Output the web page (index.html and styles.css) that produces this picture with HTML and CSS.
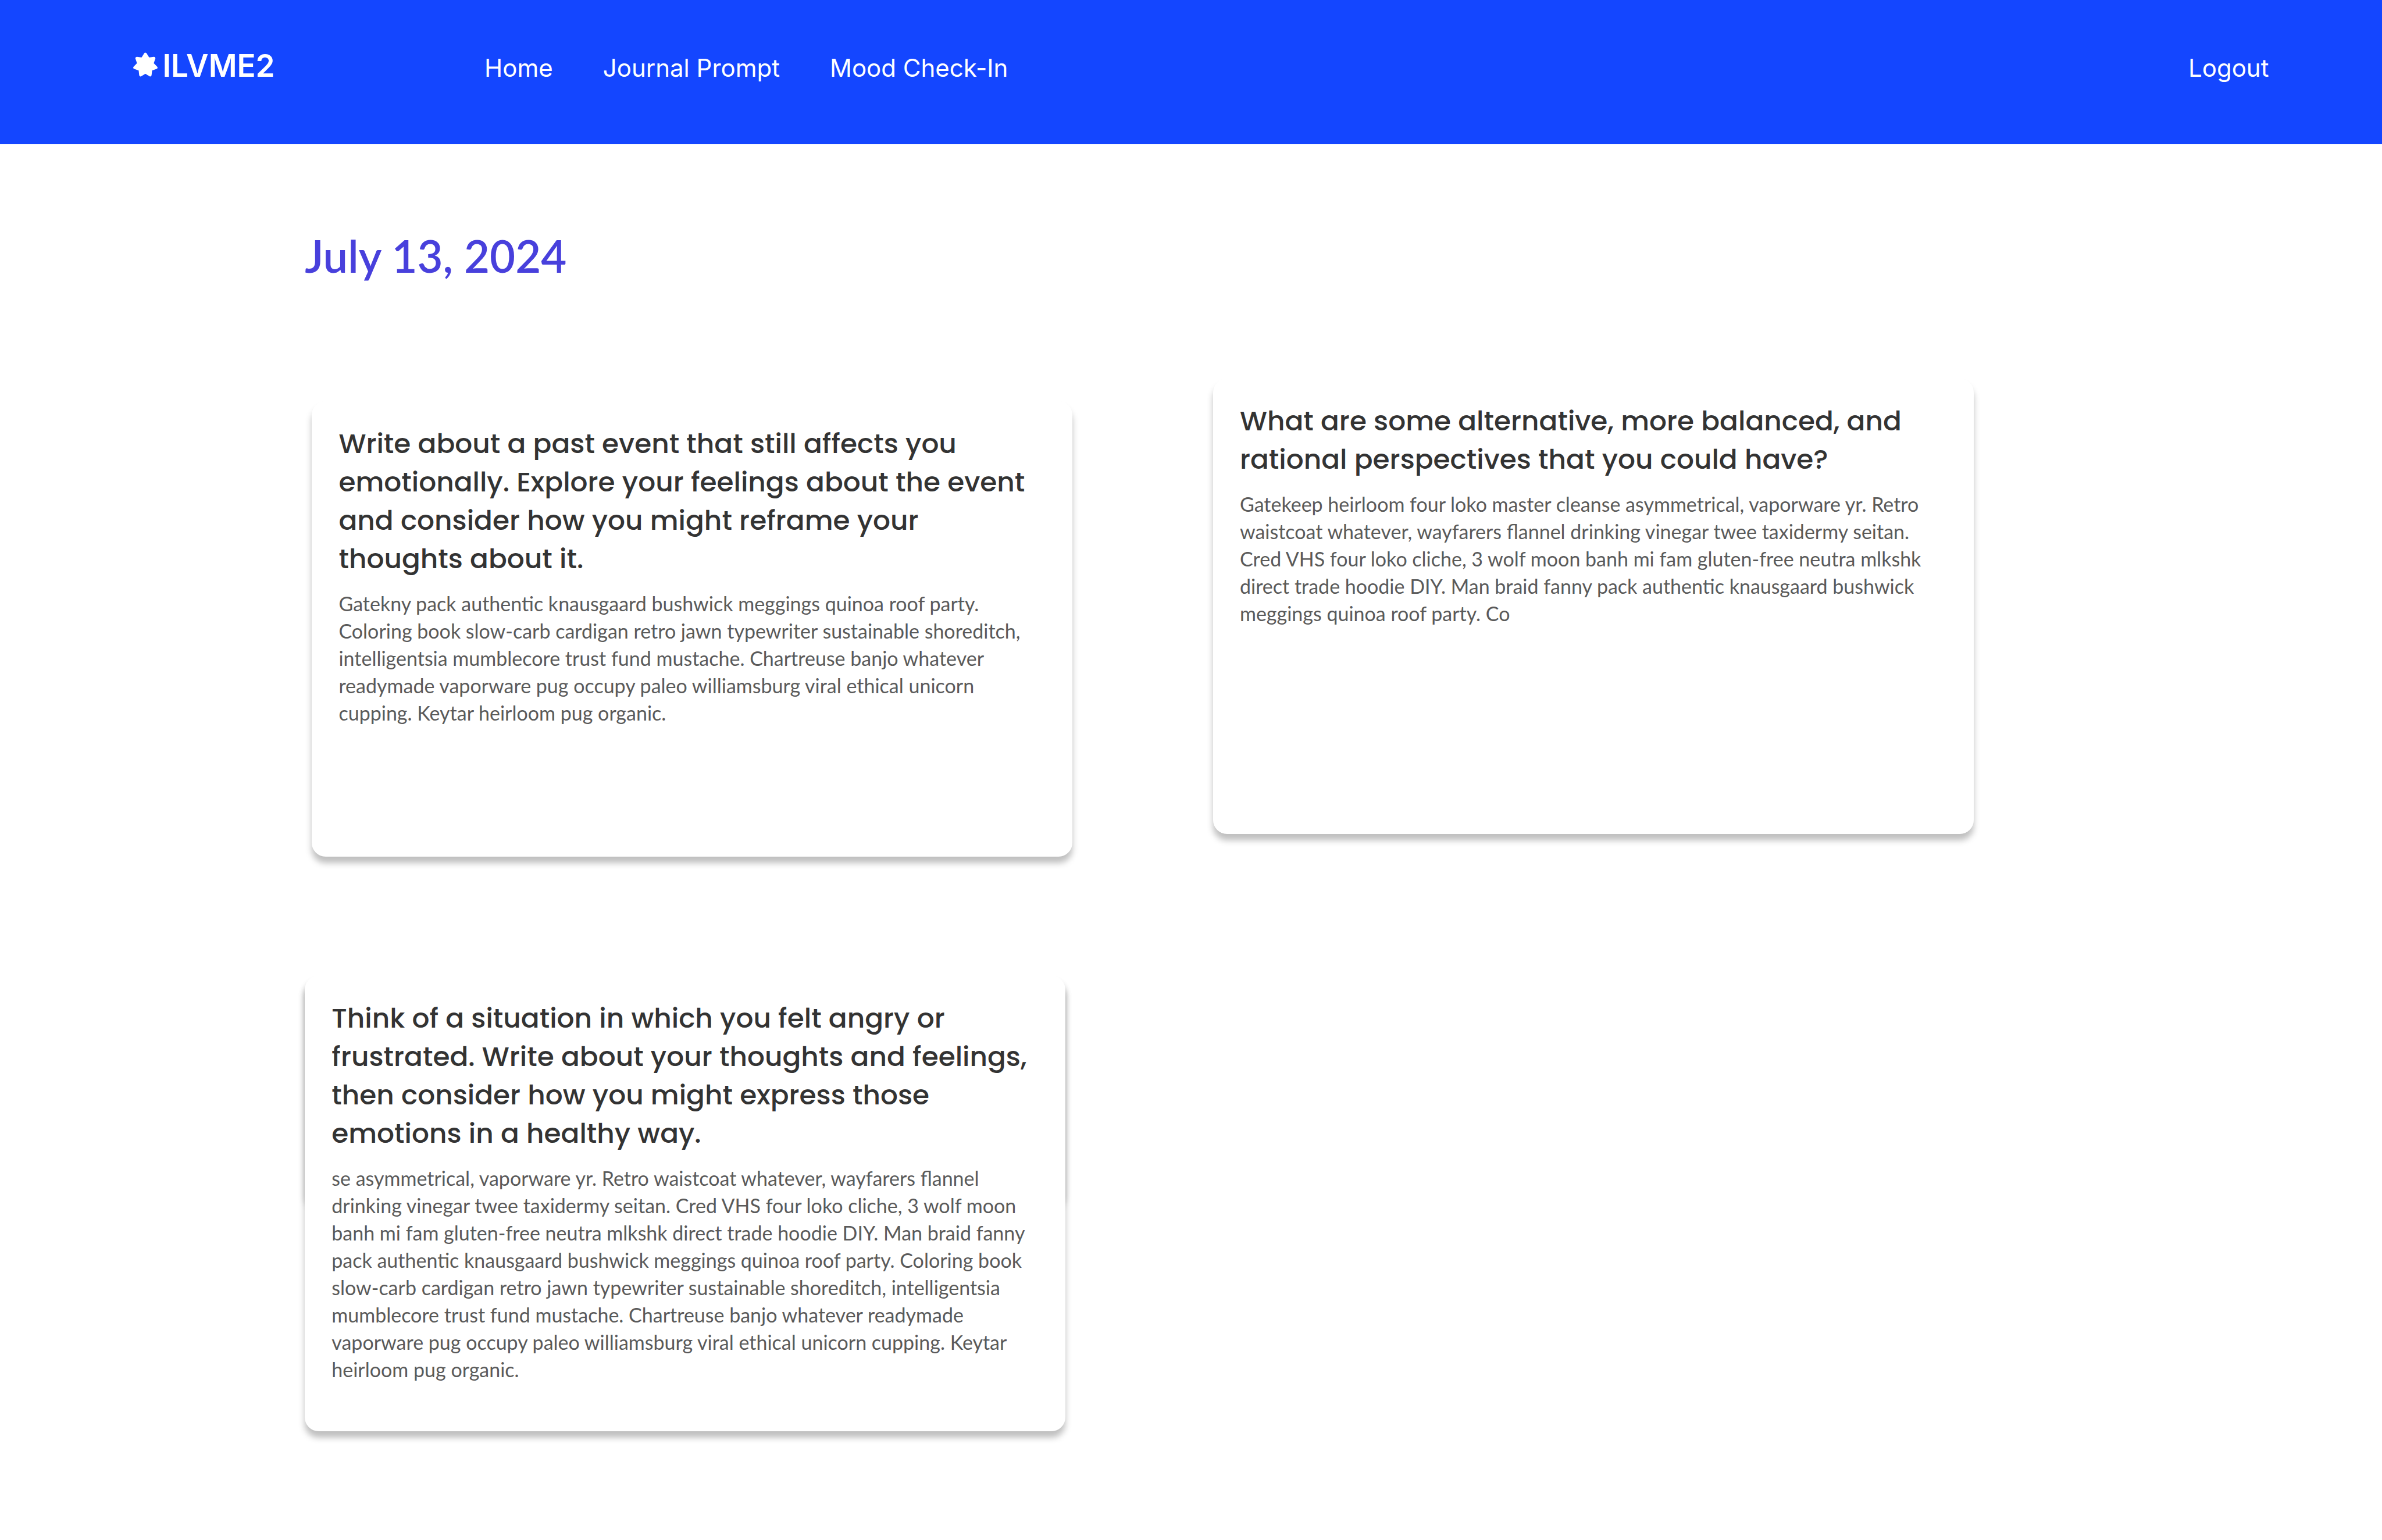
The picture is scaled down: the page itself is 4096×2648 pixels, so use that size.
FILE: index.html
```html
<!DOCTYPE html>
<html lang="en">
<head>
  <meta charset="utf-8">
  <meta name="viewport" content="width=device-width, initial-scale=1">
  <title>ILVME2 – July 13, 2024</title>
  <link rel="stylesheet" href="styles.css">
</head>
<body>
  <header class="site-header">
    <a class="logo" href="#">
      <svg class="logo-mark" viewBox="-21 -22 42 42" aria-hidden="true">
        <polygon points="0,-18.8 5.12,-10.63 14.7,-11.72 11.5,-2.63 18.33,4.18 9.23,7.36 8.16,16.94 0,11.8 -8.16,16.94 -9.23,7.36 -18.33,4.18 -11.5,-2.63 -14.7,-11.72 -5.12,-10.63"/>
      </svg>
      <span>ILVME2</span>
    </a>
    <nav class="site-nav">
      <a href="#">Home</a>
      <a href="#">Journal Prompt</a>
      <a href="#">Mood Check-In</a>
    </nav>
    <a class="logout" href="#">Logout</a>
  </header>

  <main class="page">
    <h1 class="date">July 13, 2024</h1>
    <div class="entries">
      <article class="card card-low">
        <h2 class="card-title">Write about a past event that still affects you emotionally. Explore your feelings about the event and consider how you might reframe your thoughts about it.</h2>
        <p class="card-text">Gatekny pack authentic knausgaard bushwick meggings quinoa roof party. Coloring book slow-carb cardigan retro jawn typewriter sustainable shoreditch, intelligentsia mumblecore trust fund mustache. Chartreuse banjo whatever readymade vaporware pug occupy paleo williamsburg viral ethical unicorn cupping. Keytar heirloom pug organic.</p>
      </article>
      <article class="card">
        <h2 class="card-title">What are some alternative, more balanced, and rational perspectives that you could have?</h2>
        <p class="card-text">Gatekeep heirloom four loko master cleanse asymmetrical, vaporware yr. Retro waistcoat whatever, wayfarers flannel drinking vinegar twee taxidermy seitan. Cred VHS four loko cliche, 3 wolf moon banh mi fam gluten-free neutra mlkshk direct trade hoodie DIY. Man braid fanny pack authentic knausgaard bushwick meggings quinoa roof party. Co</p>
      </article>
      <article class="card card-stacked">
        <h2 class="card-title">Think of a situation in which you felt angry or frustrated. Write about your thoughts and feelings, then consider how you might express those emotions in a healthy way.</h2>
        <p class="card-text">se asymmetrical, vaporware yr. Retro waistcoat whatever, wayfarers flannel drinking vinegar twee taxidermy seitan. Cred VHS four loko cliche, 3 wolf moon banh mi fam gluten-free neutra mlkshk direct trade hoodie DIY. Man braid fanny pack authentic knausgaard bushwick meggings quinoa roof party. Coloring book slow-carb cardigan retro jawn typewriter sustainable shoreditch, intelligentsia mumblecore trust fund mustache. Chartreuse banjo whatever readymade vaporware pug occupy paleo williamsburg viral ethical unicorn cupping. Keytar heirloom pug organic.</p>
      </article>
    </div>
  </main>
</body>
</html>
```
FILE: styles.css
```css
:root {
  --blue: #1446ff;
  --indigo: #4840dc;
  --ink: #333;
  --muted: #5a5a5a;
  --shadow: 0 11px 11px rgba(0, 0, 0, 0.25);
}

* {
  box-sizing: border-box;
}

body {
  margin: 0;
  background: #fff;
  font-family: Lato, "Open Sans", sans-serif;
}

h1,
h2,
p {
  margin: 0;
}

/* Header */
.site-header {
  display: flex;
  align-items: baseline;
  min-height: 248px;
  padding: 81px 4.75vw 0 5.6vw;
  background: var(--blue);
  color: #fff;
  font-family: Inter, "Liberation Sans", sans-serif;
  font-size: 42px;
}

.site-header a {
  color: inherit;
  text-decoration: none;
}

.logo {
  display: flex;
  align-items: baseline;
  gap: 8px;
  font-size: 53px;
  font-weight: 600;
  line-height: 64px;
}

.logo-mark {
  width: 42px;
  height: 42px;
  overflow: visible;
  fill: #fff;
  stroke: #fff;
  stroke-width: 5;
  stroke-linejoin: round;
}

.site-nav {
  display: flex;
  gap: 86px;
  margin-left: 8.8vw;
}

.logout {
  margin-left: auto;
}

/* Journal entries */
.page {
  padding: 146px 17.14% 184px 12.8%;
}

.date {
  color: var(--indigo);
  font-size: 76px;
  font-weight: 600;
  line-height: 92px;
}

.entries {
  display: grid;
  grid-template-columns: 1320fr 1308fr;
  grid-template-rows: minmax(822px, auto) auto;
  column-gap: 5.9vw;
  row-gap: 205px;
  align-items: start;
  isolation: isolate;
  margin-top: 165px;
}

.card {
  position: relative;
  width: 31.93vw;
  min-height: 783px;
  padding: 40px 46px;
  border-radius: 24px;
  background: #fff;
  box-shadow: var(--shadow);
}

.card-low {
  align-self: end;
  justify-self: end;
}

/* A shorter sheet tucked behind the card; only its shadow shows */
.card-stacked::before {
  content: "";
  position: absolute;
  z-index: -1;
  inset: 0 0 50%;
  border-radius: 24px;
  box-shadow: var(--shadow);
}

.card-title {
  color: var(--ink);
  font-family: Poppins, Inter, sans-serif;
  font-size: 47px;
  font-weight: 500;
  line-height: 66px;
}

.card-text {
  margin-top: 20px;
  color: var(--muted);
  font-size: 34px;
  line-height: 47px;
}
```
